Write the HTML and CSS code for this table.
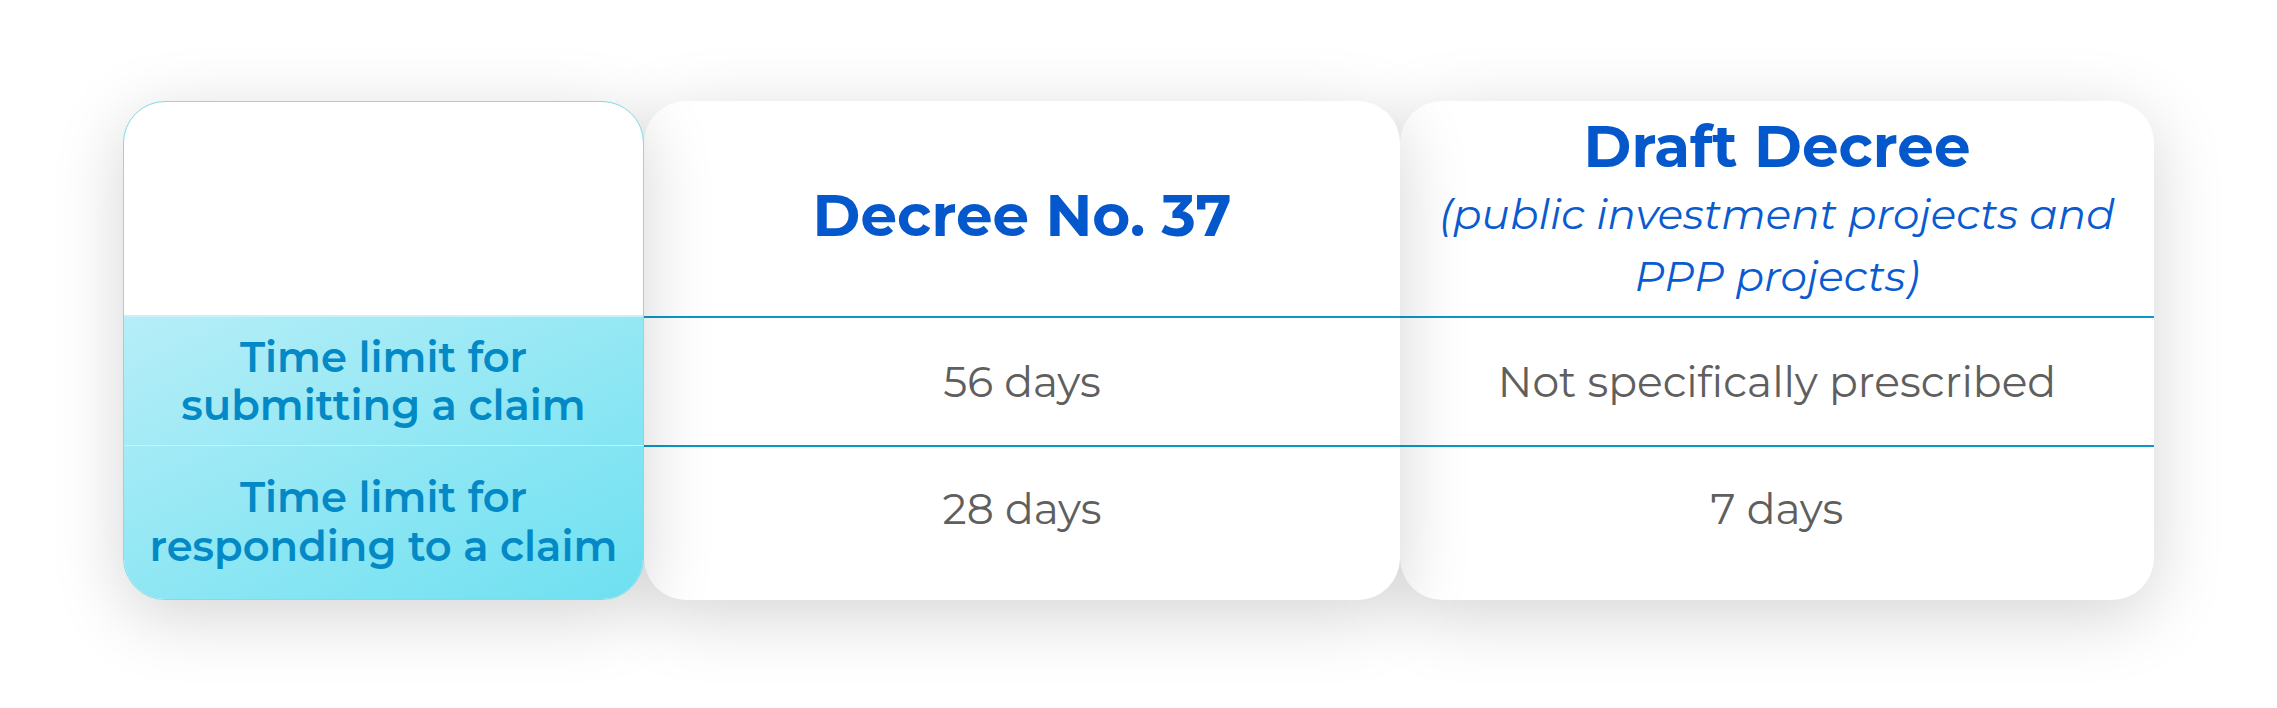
FILE: index.html
```html
<!DOCTYPE html>
<html lang="en">
<head>
<meta charset="utf-8">
<title>Claim time limits</title>
<link rel="stylesheet" href="styles.css">
</head>
<body>
<main class="stage">
  <div class="table">
    <section class="col col-label">
      <div class="cell head"></div>
      <div class="label-body">
        <div class="cell row1 label">Time limit for<br>submitting a claim</div>
        <div class="cell row2 label">Time limit for<br>responding to a claim</div>
      </div>
    </section>
    <section class="col col-mid">
      <div class="cell head">
        <h2 class="title">Decree No. 37</h2>
      </div>
      <div class="cell row1 value">56 days</div>
      <div class="cell row2 value">28 days</div>
    </section>
    <section class="col col-right">
      <div class="cell head">
        <div class="head-stack">
          <h2 class="title">Draft Decree</h2>
          <p class="subtitle">(public investment projects and<br>PPP projects)</p>
        </div>
      </div>
      <div class="cell row1 value">Not specifically prescribed</div>
      <div class="cell row2 value">7 days</div>
    </section>
  </div>
</main>
</body>
</html>
```

FILE: styles.css
```css
html, body {
  margin: 0;
  padding: 0;
  background: #ffffff;
}

body {
  width: 2277px;
  height: 708px;
  overflow: hidden;
  font-family: "Montserrat", "Open Sans", "Liberation Sans", sans-serif;
}

.stage {
  padding: 101px 0 0 123px;
}

.table {
  display: flex;
  height: 499px;
}

.col {
  display: flex;
  flex-direction: column;
  border-radius: 42px;
  background: #ffffff;
  box-shadow: 0 16px 70px rgba(0, 0, 0, 0.17);
  position: relative;
  overflow: hidden;
}

.col-label {
  width: 521px;
  z-index: 3;
  box-sizing: border-box;
  border: 1.5px solid #7ddcef;
}

.col-mid {
  width: 756px;
  z-index: 2;
}

.col-right {
  width: 754px;
  z-index: 1;
}

.cell {
  display: flex;
  align-items: center;
  justify-content: center;
  text-align: center;
  box-sizing: border-box;
}

.head {
  height: 217px;
  flex: none;
  border-bottom: 2px solid #0a98c9;
}

.col-label .head {
  height: 215px;
  border-bottom: 2px solid #c9f1f8;
}

.row1 {
  height: 129px;
  flex: none;
  border-bottom: 2px solid #0a98c9;
}

.row2 {
  flex: 1;
  padding-bottom: 30px;
}

.label-body {
  flex: 1;
  display: flex;
  flex-direction: column;
  background: linear-gradient(155deg, #b6eef8 0%, #95e8f4 45%, #6ee0f1 100%);
}

.col-label .row1 {
  border-bottom: 1.5px solid #c4f2f9;
}

.col-label .row2 {
  padding-bottom: 2px;
}

.label {
  color: #0389c5;
  font-weight: 600;
  font-size: 41.7px;
  line-height: 48.5px;
}

.title {
  margin: 0;
  color: #0558cc;
  font-weight: 700;
  font-size: 58px;
  line-height: 72px;
}

.col-mid .title {
  margin-top: 14px;
}

.head-stack {
  display: flex;
  flex-direction: column;
  align-items: center;
  margin-top: 0;
}

.subtitle {
  margin: 0;
  color: #0a5bd0;
  font-style: italic;
  font-weight: 400;
  font-size: 42px;
  line-height: 62px;
  letter-spacing: 0.1px;
}

.value {
  color: #5f5f5f;
  font-weight: 400;
  font-size: 42.5px;
  line-height: 50px;
}
```
